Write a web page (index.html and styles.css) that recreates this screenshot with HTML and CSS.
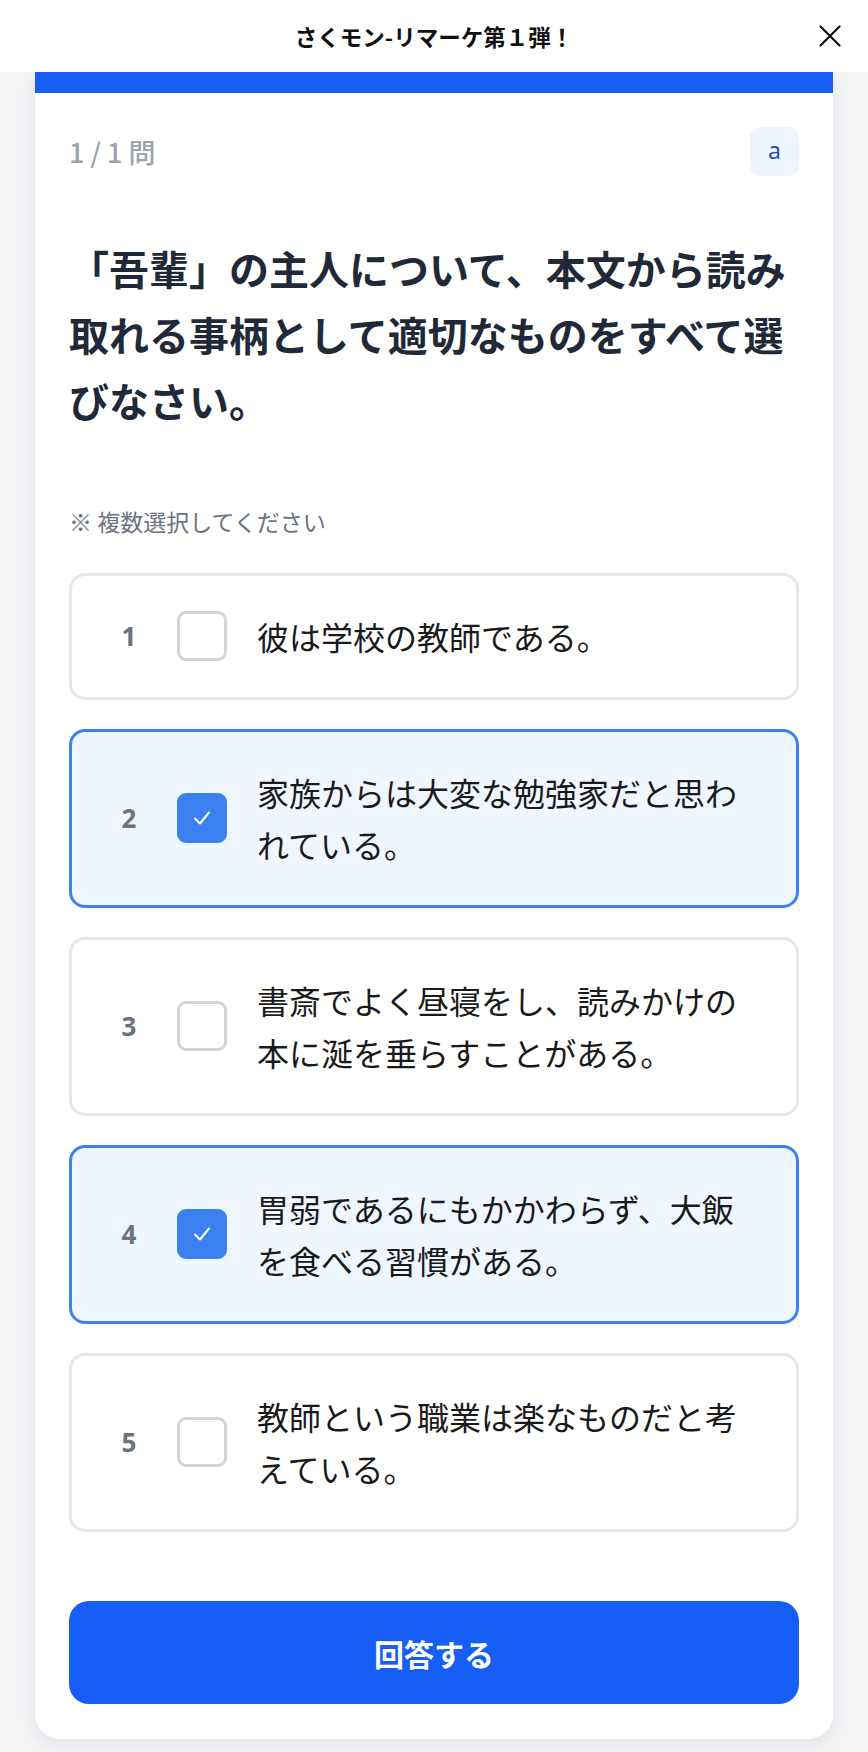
FILE: index.html
```html
<!DOCTYPE html>
<html lang="ja">
<head>
<meta charset="utf-8">
<title>さくモン-リマーケ第１弾！</title>
<link rel="stylesheet" href="styles.css">
</head>
<body>
<header class="topbar">
  <h1 class="topbar-title">さくモン-リマーケ第１弾！</h1>
  <button class="close-btn" aria-label="閉じる">
    <svg width="22" height="22" viewBox="0 0 22 22"><path d="M1.5 1.5 L20.5 20.5 M20.5 1.5 L1.5 20.5" stroke="#111" stroke-width="2.2" stroke-linecap="round" fill="none"/></svg>
  </button>
</header>
<main class="card">
  <div class="progress"></div>
  <div class="card-body">
    <div class="meta">
      <span class="counter">1 / 1 問</span>
      <span class="badge">a</span>
    </div>
    <h2 class="question">「吾輩」の主人について、本文から読み取れる事柄として適切なものをすべて選びなさい。</h2>
    <p class="hint">※ 複数選択してください</p>
    <ul class="options">
      <li class="option">
        <span class="num">1</span>
        <span class="check"></span>
        <span class="label">彼は学校の教師である。</span>
      </li>
      <li class="option selected">
        <span class="num">2</span>
        <span class="check"><svg width="20" height="16" viewBox="0 0 20 16"><path d="M3 8.5 L8 13.5 L17 2.5" stroke="#fff" stroke-width="2" fill="none" stroke-linecap="round" stroke-linejoin="round"/></svg></span>
        <span class="label">家族からは大変な勉強家だと思われている。</span>
      </li>
      <li class="option">
        <span class="num">3</span>
        <span class="check"></span>
        <span class="label">書斎でよく昼寝をし、読みかけの本に涎を垂らすことがある。</span>
      </li>
      <li class="option selected">
        <span class="num">4</span>
        <span class="check"><svg width="20" height="16" viewBox="0 0 20 16"><path d="M3 8.5 L8 13.5 L17 2.5" stroke="#fff" stroke-width="2" fill="none" stroke-linecap="round" stroke-linejoin="round"/></svg></span>
        <span class="label">胃弱であるにもかかわらず、大飯を食べる習慣がある。</span>
      </li>
      <li class="option">
        <span class="num">5</span>
        <span class="check"></span>
        <span class="label">教師という職業は楽なものだと考えている。</span>
      </li>
    </ul>
    <button class="submit">回答する</button>
  </div>
</main>
</body>
</html>
```
FILE: styles.css
```css
* { box-sizing: border-box; }
html, body { margin: 0; padding: 0; }
body {
  background: #f3f4f6;
  font-family: "Noto Sans CJK JP", "Noto Sans", sans-serif;
  color: #1f2937;
  padding-bottom: 13px;
}
.topbar {
  height: 72px;
  background: #fff;
  display: flex;
  align-items: center;
  justify-content: center;
  position: relative;
}
.topbar-title {
  margin: 0;
  font-size: 22.5px;
  font-weight: 700;
  color: #111;
  letter-spacing: 0;
}
.close-btn {
  position: absolute;
  right: 27px;
  top: 25px;
  width: 22px;
  height: 22px;
  padding: 0;
  border: 0;
  background: none;
  display: flex;
}
.card {
  display: block;
  margin: 0 35px;
  background: #fff;
  border-radius: 0 0 25px 25px;
  box-shadow: 0 6px 18px rgba(15, 23, 42, 0.07);
  overflow: hidden;
}
.progress {
  height: 21px;
  background: #165ef6;
}
.card-body {
  padding: 34px 34px 35px;
}
.meta {
  display: flex;
  justify-content: space-between;
  align-items: center;
  height: 49px;
}
.counter {
  font-size: 27px;
  color: #9ca3af;
  font-weight: 500;
}
.badge {
  width: 49px;
  height: 49px;
  border-radius: 10px;
  background: #eef5ff;
  color: #1e4fb8;
  font-family: "Noto Sans", sans-serif;
  font-size: 23px;
  display: flex;
  align-items: center;
  justify-content: center;
  padding-bottom: 3px;
}
.question {
  margin: 59px 0 0;
  font-size: 40px;
  line-height: 66px;
  font-weight: 700;
  color: #1f2937;
}
.hint {
  margin: 73px 0 0;
  font-size: 23px;
  line-height: 30px;
  color: #6b7280;
}
.options {
  list-style: none;
  margin: 37px 0 0;
  padding: 0;
  display: flex;
  flex-direction: column;
  gap: 29px;
}
.option {
  display: flex;
  align-items: center;
  border: 3px solid #e5e7eb;
  border-radius: 16px;
  padding: 34px 34px 35px;
  background: #fff;
}
.option.selected {
  border-color: #3b82f0;
  background: #eff6ff;
}
.num {
  width: 46px;
  flex: none;
  text-align: center;
  font-size: 26px;
  font-weight: 700;
  color: #6b7280;
  font-family: "Noto Sans", "Noto Sans CJK JP", sans-serif;
}
.check {
  flex: none;
  width: 50px;
  height: 50px;
  margin-left: 25px;
  margin-right: 30px;
  border: 3px solid #d1d5db;
  border-radius: 9px;
  background: #fff;
  display: flex;
  align-items: center;
  justify-content: center;
}
.selected .check {
  background: #3b82f0;
  border-color: #3b82f0;
}
.label {
  flex: 1;
  font-size: 32px;
  line-height: 52px;
  color: #1a1a1a;
}
.submit {
  display: flex;
  align-items: center;
  justify-content: center;
  width: 100%;
  height: 103px;
  margin-top: 69px;
  border: 0;
  border-radius: 20px;
  background: #165ef6;
  color: #fff;
  font-family: "Noto Sans CJK JP", sans-serif;
  font-size: 30px;
  font-weight: 700;
}
```
